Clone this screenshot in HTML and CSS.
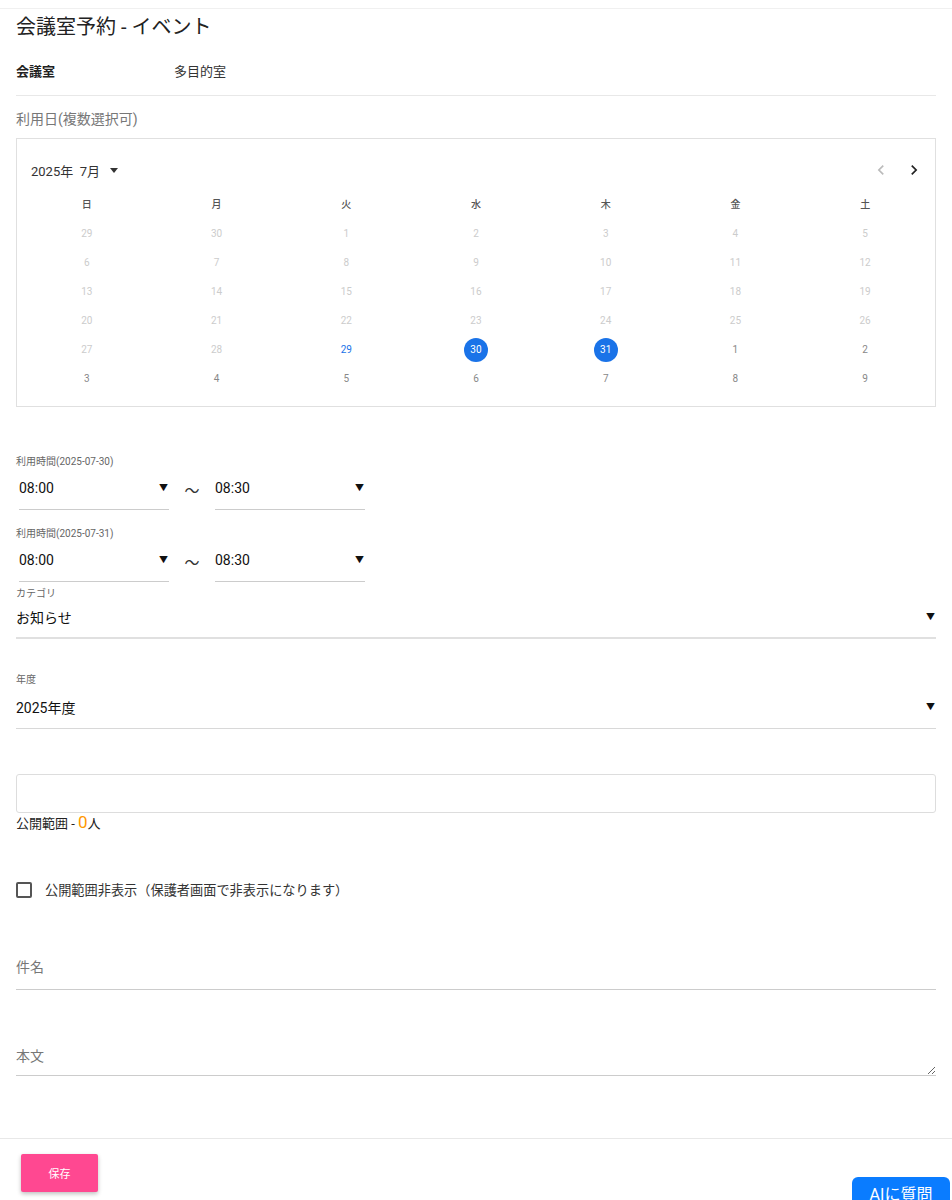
FILE: index.html
```html
<!DOCTYPE html>
<html lang="ja">
<head>
<meta charset="UTF-8">
<meta name="viewport" content="width=device-width, initial-scale=1.0">
<title>会議室予約 - イベント</title>
<link rel="stylesheet" href="styles.css">
</head>
<body>
<div class="topbar"></div>
<div class="page">
<h1 class="title">会議室予約 - イベント</h1>

<div class="room-row">
<div class="room-label">会議室</div>
<div class="room-value">多目的室</div>
</div>

<div class="section-label">利用日(複数選択可)</div>
<div class="calendar">
<div class="cal-head">
<div class="cal-month">2025年&nbsp; 7月 <span class="caret"></span></div>
<div class="cal-nav">
<svg class="nav-prev" width="20" height="20" viewBox="0 0 24 24"><path d="M15.4 7.4 14 6l-6 6 6 6 1.4-1.4L10.8 12z" fill="currentColor"/></svg>
<svg class="nav-next" width="20" height="20" viewBox="0 0 24 24"><path d="M8.6 16.6 10 18l6-6-6-6-1.4 1.4 4.6 4.6z" fill="currentColor"/></svg>
</div>
</div>
<div class="cal-grid" id="cal"></div>
</div>

<div class="time-block">
<div class="small-label">利用時間(2025-07-30)</div>
<div class="time-row">
<div class="time-select"><span>08:00</span><span class="tri">▼</span></div>
<span class="tilde">〜</span>
<div class="time-select"><span>08:30</span><span class="tri">▼</span></div>
</div>
</div>
<div class="time-block second">
<div class="small-label">利用時間(2025-07-31)</div>
<div class="time-row">
<div class="time-select"><span>08:00</span><span class="tri">▼</span></div>
<span class="tilde">〜</span>
<div class="time-select"><span>08:30</span><span class="tri">▼</span></div>
</div>
</div>

<div class="select-field category">
<div class="small-label">カテゴリ</div>
<div class="select-box thick"><span>お知らせ</span><span class="tri">▼</span></div>
</div>

<div class="select-field year">
<div class="small-label">年度</div>
<div class="select-box"><span>2025年度</span><span class="tri">▼</span></div>
</div>

<div class="scope-input"></div>
<div class="scope-count">公開範囲 - <span class="count">0</span>人</div>

<label class="check-row">
<span class="checkbox"></span>
<span>公開範囲非表示（保護者画面で非表示になります）</span>
</label>

<input class="text-input" type="text" placeholder="件名">
<textarea class="text-area" placeholder="本文"></textarea>
</div>

<div class="footer">
<button class="save-btn">保存</button>
</div>
<button class="ai-btn">AIに質問</button>

<script>
// July 2025 calendar, week starts on Sunday
const days = [
  [29,'off'],[30,'off'],[1,'off'],[2,'off'],[3,'off'],[4,'off'],[5,'off'],
  [6,'off'],[7,'off'],[8,'off'],[9,'off'],[10,'off'],[11,'off'],[12,'off'],
  [13,'off'],[14,'off'],[15,'off'],[16,'off'],[17,'off'],[18,'off'],[19,'off'],
  [20,'off'],[21,'off'],[22,'off'],[23,'off'],[24,'off'],[25,'off'],[26,'off'],
  [27,'off'],[28,'off'],[29,'today'],[30,'sel'],[31,'sel'],[1,''],[2,''],
  [3,''],[4,''],[5,''],[6,''],[7,''],[8,''],[9,'']
];
const cal = document.getElementById('cal');
let html = '';
for (const w of ['日','月','火','水','木','金','土']) html += '<div class="wd">' + w + '</div>';
for (const [n, cls] of days) html += '<div class="day ' + cls + '"><span>' + n + '</span></div>';
cal.innerHTML = html;
</script>
</body>
</html>
```

FILE: styles.css
```css
*{box-sizing:border-box}
body{margin:0;background:#fff;color:#222;font-family:Roboto,"Noto Sans CJK JP",sans-serif;min-height:1200px;position:relative;overflow:hidden}
.topbar{height:9px;border-bottom:1px solid #f0f0f0}
.page{padding:0 16px}
.title{margin:0;padding-top:4px;font-size:20px;font-weight:400;line-height:28px;color:#222}
.room-row{display:flex;align-items:center;padding-top:20px;padding-bottom:15px;border-bottom:1px solid #e8e8e8;font-size:13px}
.room-label{width:158px;font-weight:700;color:#222}
.room-value{color:#333}
.section-label{font-size:14px;color:#777;margin-top:13px;line-height:20px}
.calendar{margin-top:9px;border:1px solid #e0e0e0;height:269px;padding:0 5px}
.cal-head{display:flex;justify-content:space-between;align-items:center;height:30px;margin-top:16px;padding:0 9px}
.cal-month{font-size:13px;color:#333;display:flex;align-items:center}
.caret{display:inline-block;width:0;height:0;border-left:4px solid transparent;border-right:4px solid transparent;border-top:5px solid #333;margin-left:10px}
.cal-nav{display:flex;gap:13px;margin-right:-3px}
.nav-prev{color:#bbb}
.nav-next{color:#222}
.cal-grid{display:grid;grid-template-columns:repeat(7,1fr);grid-auto-rows:29px;margin-top:5px}
.wd{font-size:10px;color:#555;display:flex;align-items:center;justify-content:center;height:27px;font-weight:500}
.day{display:flex;align-items:center;justify-content:center;font-size:10px;color:#888}
.day span{width:24px;height:24px;border-radius:50%;display:flex;align-items:center;justify-content:center}
.day.off{color:#ccc}
.day.today{color:#1a73e8}
.day.sel span{background:#1a73e8;color:#fff}
.time-block{margin-top:47px}
.time-block.second{margin-top:16px}
.small-label{font-size:10px;color:#666;line-height:16px}
.time-row{display:flex;align-items:center;margin-top:2px}
.time-select{width:150px;height:38px;margin-left:3px;display:flex;align-items:center;justify-content:space-between;font-size:14px;color:#111;border-bottom:1px solid #ccc;padding-bottom:6px}
.tilde{font-size:15px;color:#333;width:46px;text-align:center;margin-right:-3px;margin-top:-3px}
.tri{font-size:9px;color:#111;margin-right:1px}
.select-field{margin-top:4px}
.select-field.year{margin-top:33px}
.select-box{display:flex;justify-content:space-between;align-items:center;height:36px;font-size:14px;color:#111;border-bottom:1px solid #d8d8d8;padding-bottom:6px}
.select-box.thick{border-bottom:2px solid #e0e0e0;height:37px}
.select-field.year .select-box{height:41px;padding-top:3px}
.scope-input{margin-top:45px;height:39px;border:1px solid #ddd;border-radius:3px}
.scope-count{font-size:13px;color:#222;margin-top:0;line-height:18px}
.count{color:#ff9800;font-size:17px}
.check-row{display:flex;align-items:center;gap:13px;margin-top:47px;font-size:13.2px;color:#333}
.checkbox{width:16px;height:16px;border:2px solid #555;border-radius:2px}
.text-input{display:block;width:100%;margin-top:45px;border:0;border-bottom:1px solid #ccc;height:46px;font-size:14px;font-family:inherit;padding:0;outline:none}
.text-input::placeholder,.text-area::placeholder{color:#777}
.text-area{display:block;width:100%;margin-top:45px;border:0;border-bottom:1px solid #ccc;height:41px;font-size:14px;font-family:inherit;padding:11px 0 0;line-height:20px;outline:none}
.footer{margin-top:62px;border-top:1px solid #e8e8e8;padding:15px 21px}
.save-btn{width:77px;height:38px;background:#ff4891;color:#fff;border:0;border-radius:2px;font-size:11px;font-family:inherit;box-shadow:0 2px 4px rgba(0,0,0,.25)}
.ai-btn{position:absolute;left:852px;top:1177px;width:98px;height:44px;background:#0a7cff;color:#fff;border:0;border-radius:6px;font-size:16px;font-family:inherit;padding-bottom:14px}
```
